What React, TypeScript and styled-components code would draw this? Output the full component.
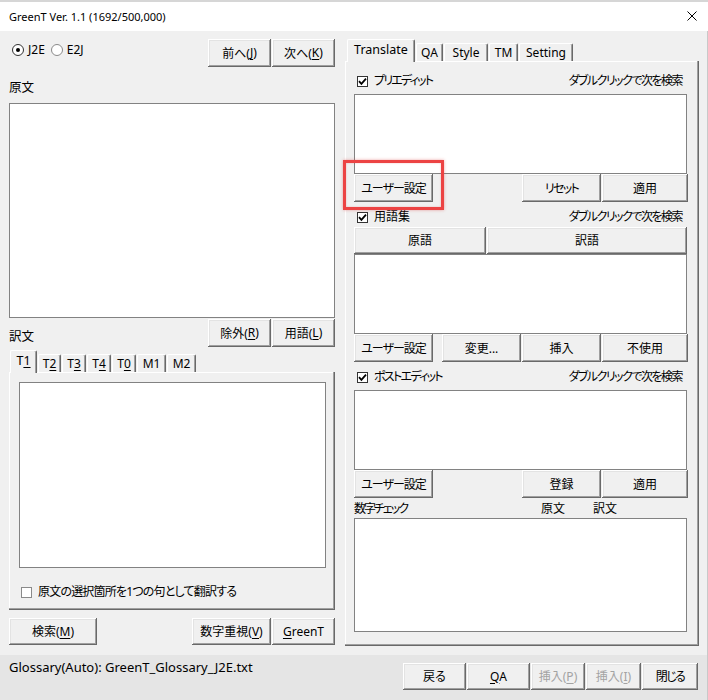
import * as React from 'react';
import styled, { createGlobalStyle } from 'styled-components';

const GlobalStyle = createGlobalStyle`
    html, body {
        margin: 0;
        padding: 0;
        background: #f0f0f0;
    }
    body {
        font-family: "Noto Sans", "Noto Sans CJK JP", sans-serif;
        font-size: 12px;
        color: #000;
        font-feature-settings: "palt";
    }
`;

type BoxProps = { $w?: number; $h: number };

export default function App() {
    return (
        <>
            <GlobalStyle />
            <Window>
                <TitleBar>
                    <TitleText>GreenT Ver. 1.1 (1692/500,000)</TitleText>
                    <CloseIcon viewBox="0 0 10 10">
                        <path d="M0.5 0.5 L9.5 9.5 M9.5 0.5 L0.5 9.5" stroke="#000" strokeWidth="1" />
                    </CloseIcon>
                </TitleBar>

                <Body>
                    <LeftCol>
                        <Row $h={28}>
                            <Radios>
                                <Radio $on /> <span>J2E</span>
                                <Radio /> <span>E2J</span>
                            </Radios>
                            <Group>
                                <Button $w={63}>前へ(<Mn>J</Mn>)</Button>
                                <Button $w={63}>次へ(<Mn>K</Mn>)</Button>
                            </Group>
                        </Row>
                        <Label $top={13}>原文</Label>
                        <TextBox $h={215} $top={7} />
                        <Row $h={28} $top={1}>
                            <Label $top={10}>訳文</Label>
                            <Group>
                                <Button $w={63}>除外(<Mn>R</Mn>)</Button>
                                <Button $w={63}>用語(<Mn>L</Mn>)</Button>
                            </Group>
                        </Row>
                        <TabStrip $h={25} $pad={1}>
                            <Tab $w={27} $active>T<Mn>1</Mn></Tab>
                            <Tab $w={23}>T<Mn>2</Mn></Tab>
                            <Tab $w={24}>T<Mn>3</Mn></Tab>
                            <Tab $w={24}>T<Mn>4</Mn></Tab>
                            <Tab $w={24}>T<Mn>0</Mn></Tab>
                            <Tab $w={29}>M1</Tab>
                            <Tab $w={29}>M2</Tab>
                        </TabStrip>
                        <TabPanel $h={238} $padL={10}>
                            <TextBox $h={186} $w={307} $top={10} />
                            <CheckRow $top={16}>
                                <CheckBox $light />
                                <Txt $ls={-0.8}>原文の選択箇所を1つの句として翻訳する</Txt>
                            </CheckRow>
                        </TabPanel>
                        <Row $h={27} $top={8}>
                            <Button $w={88} $h={27}>検索(<Mn>M</Mn>)</Button>
                            <Group>
                                <Button $w={79} $h={27}>数字重視(<Mn>V</Mn>)</Button>
                                <Button $w={63} $h={27}><Mn>G</Mn>reenT</Button>
                            </Group>
                        </Row>
                    </LeftCol>

                    <RightCol>
                        <TabStrip $h={22} $pad={2}>
                            <Tab $w={68} $active>Translate</Tab>
                            <Tab $w={27}>QA</Tab>
                            <Tab $w={44}>Style</Tab>
                            <Tab $w={29}>TM</Tab>
                            <Tab $w={54}>Setting</Tab>
                        </TabStrip>
                        <TabPanel $h={585} $padL={9}>
                            <SectionHead $top={12}>
                                <CheckRow>
                                    <CheckBox><Tick /></CheckBox>
                                    <Txt $ls={-1.8}>プリエディット</Txt>
                                </CheckRow>
                                <Txt $ls={-1.5}>ダブルクリックで次を検索</Txt>
                            </SectionHead>
                            <TextBox $h={80} $w={333} $top={5} />
                            <ButtonRow>
                                <Button $w={79}><Txt $ls={-1}>ユーザー設定</Txt></Button>
                                <Group>
                                    <Button $w={79}><Txt $ls={-1.7}>リセット</Txt></Button>
                                    <Button $w={86}>適用</Button>
                                </Group>
                            </ButtonRow>

                            <SectionHead $top={7}>
                                <CheckRow>
                                    <CheckBox><Tick /></CheckBox>
                                    <Txt>用語集</Txt>
                                </CheckRow>
                                <Txt $ls={-1.5}>ダブルクリックで次を検索</Txt>
                            </SectionHead>
                            <HeaderRow>
                                <Button $w={132} $h={27}>原語</Button>
                                <Button $w={200} $h={27}>訳語</Button>
                            </HeaderRow>
                            <TextBox $h={80} $w={333} />
                            <ButtonRow>
                                <Button $w={79}><Txt $ls={-1}>ユーザー設定</Txt></Button>
                                <Group>
                                    <Button $w={79}>変更...</Button>
                                    <Button $w={79}>挿入</Button>
                                    <Button $w={86}>不使用</Button>
                                </Group>
                            </ButtonRow>

                            <SectionHead $top={7}>
                                <CheckRow>
                                    <CheckBox><Tick /></CheckBox>
                                    <Txt $ls={-1.7}>ポストエディット</Txt>
                                </CheckRow>
                                <Txt $ls={-1.5}>ダブルクリックで次を検索</Txt>
                            </SectionHead>
                            <TextBox $h={80} $w={333} $top={5} />
                            <ButtonRow>
                                <Button $w={79}><Txt $ls={-1}>ユーザー設定</Txt></Button>
                                <Group>
                                    <Button $w={79}>登録</Button>
                                    <Button $w={86}>適用</Button>
                                </Group>
                            </ButtonRow>

                            <NumberHead>
                                <Cell $w={187}><Txt $ls={-2}>数字チェック</Txt></Cell>
                                <Cell $w={52}>原文</Cell>
                                <Cell>訳文</Cell>
                            </NumberHead>
                            <TextBox $h={114} $w={333} $top={1} />
                        </TabPanel>
                    </RightCol>
                </Body>

                <StatusBar>
                    <StatusText>Glossary(Auto): GreenT_Glossary_J2E.txt</StatusText>
                    <Group>
                        <Button $w={63} $h={27}>戻る</Button>
                        <Button $w={63} $h={27}><Mn>Q</Mn>A</Button>
                        <Button $w={54} $h={27} disabled>挿入(<Mn>P</Mn>)</Button>
                        <Button $w={55} $h={27} disabled>挿入(<Mn>I</Mn>)</Button>
                        <Button $w={56} $h={27}><Txt $ls={-1.6}>閉じる</Txt></Button>
                    </Group>
                </StatusBar>

                <Highlight />
            </Window>
        </>
    );
}

function Tick() {
    return (
        <svg width="9" height="9" viewBox="0 0 9 9">
            <path d="M1 4.2 L3.4 6.8 L8 1.6" fill="none" stroke="#000" strokeWidth="1.8" />
        </svg>
    );
}

const Window = styled.div`
    position: relative;
    width: 708px;
    height: 700px;
    display: flex;
    flex-direction: column;
    overflow: hidden;
    background: #f0f0f0;
`;

const TitleBar = styled.div`
    height: 31px;
    box-sizing: border-box;
    border-top: 2px solid #d6d6d6;
    background: #fff;
    display: flex;
    align-items: center;
    justify-content: space-between;
    padding: 0 11px 0 9px;
`;

const TitleText = styled.span`
    font-size: 11px;
    line-height: 16px;
`;

const CloseIcon = styled.svg`
    width: 10px;
    height: 10px;
    margin-top: -1px;
`;

const Body = styled.div`
    height: 624px;
    box-sizing: border-box;
    display: flex;
    gap: 10px;
    padding: 8px 0 0 9px;
    background: #f0f0f0;
    border-right: 1px solid #c9c9c9;
`;

const LeftCol = styled.div`
    width: 326px;
    display: flex;
    flex-direction: column;
`;

const RightCol = styled.div`
    width: 354px;
    display: flex;
    flex-direction: column;
`;

const Row = styled.div<{ $h: number; $top?: number }>`
    height: ${p => p.$h}px;
    margin-top: ${p => p.$top ?? 0}px;
    display: flex;
    justify-content: space-between;
    align-items: flex-start;
`;

const Group = styled.div`
    display: flex;
    gap: 1px;
`;

const Txt = styled.span<{ $ls?: number }>`
    letter-spacing: ${p => p.$ls ?? 0}px;
    white-space: nowrap;
`;

const Radios = styled.div`
    display: flex;
    align-items: center;
    height: 16px;
    margin: 3px 0 0 3px;
    line-height: 16px;

    & > span:nth-child(2) {
        margin: 0 6px 0 4px;
    }
    & > span:nth-child(4) {
        margin-left: 4px;
    }
`;

const Radio = styled.span<{ $on?: boolean }>`
    width: 12px;
    height: 12px;
    box-sizing: border-box;
    border-radius: 50%;
    border: 1px solid ${p => p.$on ? '#333' : '#8a8a8a'};
    background: #fff;
    display: inline-flex;
    align-items: center;
    justify-content: center;

    &::after {
        content: "";
        width: 4px;
        height: 4px;
        border-radius: 50%;
        background: ${p => p.$on ? '#000' : 'transparent'};
    }
`;

const Label = styled.div<{ $top?: number }>`
    margin-top: ${p => p.$top ?? 0}px;
    height: 16px;
    line-height: 16px;
    font-size: 12.5px;
`;

const TextBox = styled.div<{ $h: number; $w?: number; $top?: number }>`
    box-sizing: border-box;
    width: ${p => p.$w ? `${p.$w}px` : '100%'};
    height: ${p => p.$h}px;
    margin-top: ${p => p.$top ?? 0}px;
    background: #fff;
    border: 1px solid #828282;
    flex-shrink: 0;
`;

const Button = styled.button<BoxProps>`
    width: ${p => p.$w}px;
    height: ${p => p.$h ?? 28}px;
    box-sizing: border-box;
    flex-shrink: 0;
    margin: 0;
    padding: 0 0 1px;
    border: none;
    background: #f0f0f0;
    box-shadow: inset -1px -1px #696969, inset 1px 1px #ffffff, inset -2px -2px #a0a0a0, inset 2px 2px #e3e3e3;
    font: inherit;
    font-size: 12px;
    color: ${p => p.disabled ? '#a3a3a3' : '#000'};
    display: flex;
    align-items: center;
    justify-content: center;
    white-space: nowrap;
`;

const Mn = styled.span`
    text-decoration: underline;
    text-underline-offset: 2px;
`;

const TabStrip = styled.div<{ $h: number; $pad: number }>`
    height: ${p => p.$h}px;
    display: flex;
    align-items: flex-end;
    gap: 1px;
    padding-left: ${p => p.$pad}px;
    position: relative;
    z-index: 1;
`;

const Tab = styled.div<{ $w: number; $active?: boolean }>`
    width: ${p => p.$w}px;
    height: ${p => p.$active ? 23 : 18}px;
    margin-bottom: ${p => p.$active ? -1 : 0}px;
    box-sizing: border-box;
    border-top: 1px solid #fff;
    border-left: 1px solid #fff;
    border-right: 1px solid #696969;
    border-radius: 2px 2px 0 0;
    box-shadow: inset -1px 0 #a0a0a0;
    background: #f0f0f0;
    display: flex;
    align-items: ${p => p.$active ? 'flex-start' : 'center'};
    padding-top: ${p => p.$active ? 2 : 0}px;
    justify-content: center;
    font-size: ${p => p.$active ? 12.5 : 12}px;
    line-height: 16px;
`;

const TabPanel = styled.div<{ $h: number; $padL: number }>`
    height: ${p => p.$h}px;
    box-sizing: border-box;
    padding-left: ${p => p.$padL}px;
    display: flex;
    flex-direction: column;
    background: #f0f0f0;
    box-shadow: inset -1px -1px #696969, inset -2px -2px #a0a0a0, inset 1px 1px #ffffff;
`;

const CheckRow = styled.div<{ $top?: number }>`
    display: flex;
    align-items: center;
    gap: 6px;
    height: 16px;
    line-height: 16px;
    margin-top: ${p => p.$top ?? 0}px;
    padding-left: ${p => p.$top !== undefined ? 2 : 3}px;
`;

const CheckBox = styled.span<{ $light?: boolean }>`
    width: 11px;
    height: 11px;
    box-sizing: border-box;
    border: 1px solid ${p => p.$light ? '#8a8a8a' : '#333'};
    background: #fff;
    display: inline-flex;
    align-items: center;
    justify-content: center;
`;

const SectionHead = styled.div<{ $top: number }>`
    width: 328px;
    height: 16px;
    margin-top: ${p => p.$top}px;
    display: flex;
    justify-content: space-between;
    align-items: center;
    line-height: 16px;
`;

const ButtonRow = styled.div`
    width: 334px;
    height: 28px;
    display: flex;
    justify-content: space-between;
    flex-shrink: 0;
`;

const HeaderRow = styled.div`
    width: 333px;
    margin-top: 2px;
    display: flex;
    gap: 1px;
`;

const NumberHead = styled.div`
    height: 16px;
    margin-top: 3px;
    display: flex;
    line-height: 16px;
`;

const Cell = styled.span<{ $w?: number }>`
    width: ${p => p.$w ? `${p.$w}px` : 'auto'};
`;

const StatusBar = styled.div`
    height: 45px;
    box-sizing: border-box;
    display: flex;
    justify-content: space-between;
    align-items: flex-start;
    padding: 0 9px 0 9px;
    background: #e5e5e5;
    border-right: 1px solid #c9c9c9;

    & > div {
        margin-top: 8px;
    }
`;

const StatusText = styled.span`
    margin-top: 4px;
    line-height: 16px;
    font-size: 13px;
`;

const Highlight = styled.div`
    position: absolute;
    left: 343px;
    top: 160px;
    width: 101px;
    height: 50px;
    box-sizing: border-box;
    border: 3px solid #ec4343;
    box-shadow: 0 0 3px rgba(220, 60, 60, 0.45), inset 0 0 2px rgba(220, 60, 60, 0.35);
    pointer-events: none;
`;
